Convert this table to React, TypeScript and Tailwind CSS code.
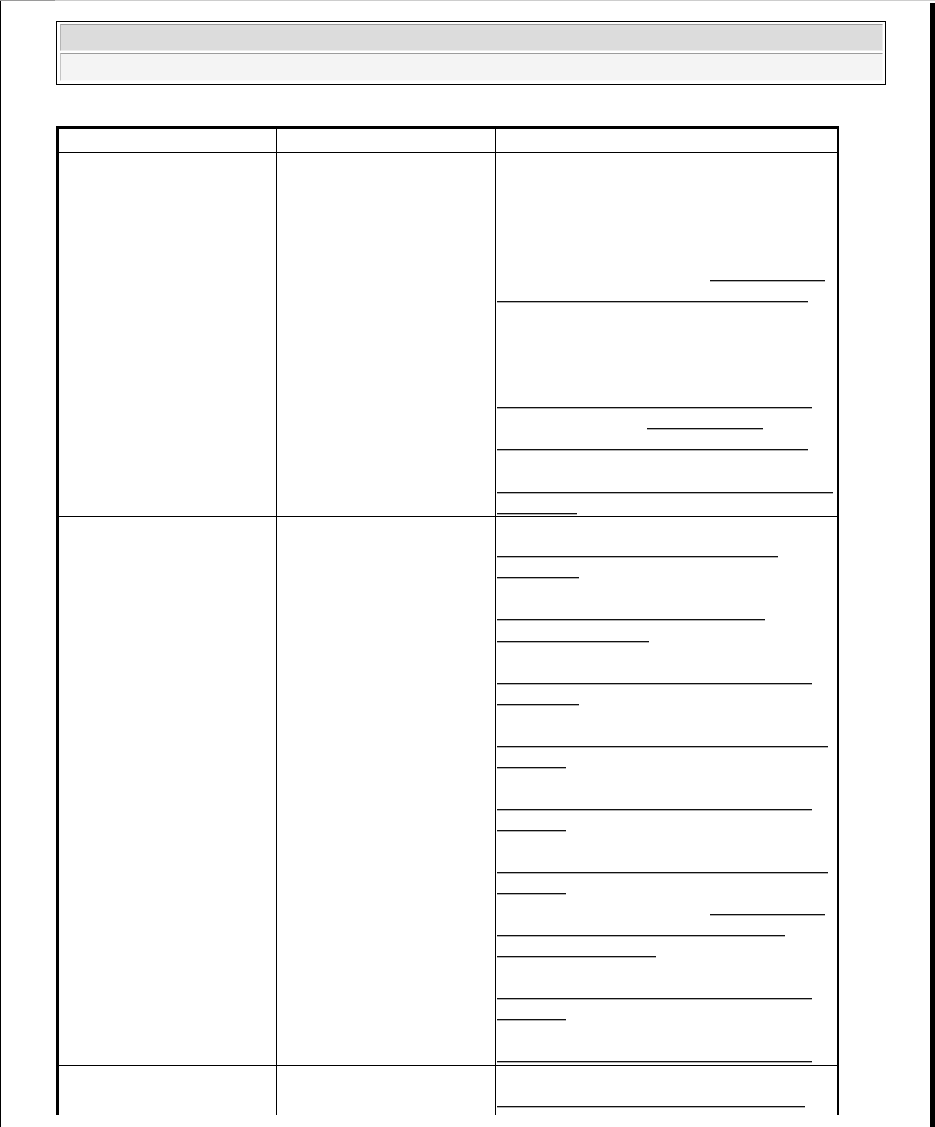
type Rule = { k: number; x: number; w: number };

// underline segments in the third column, k = text line index inside the cell
const rowOne: Rule[] = [
  { k: 5, x: 214, w: 115 },
  { k: 6, x: 1, w: 311 },
  { k: 11, x: 1, w: 315 },
  { k: 12, x: 151, w: 116 },
  { k: 13, x: 1, w: 311 },
  { k: 15, x: 1, w: 336 },
  { k: 16, x: 1, w: 80 },
];

const rowTwo: Rule[] = [
  { k: 1, x: 1, w: 281 },
  { k: 2, x: 1, w: 82 },
  { k: 4, x: 1, w: 268 },
  { k: 5, x: 1, w: 152 },
  { k: 7, x: 1, w: 315 },
  { k: 8, x: 1, w: 82 },
  { k: 10, x: 1, w: 331 },
  { k: 11, x: 1, w: 69 },
  { k: 13, x: 1, w: 315 },
  { k: 14, x: 1, w: 69 },
  { k: 16, x: 1, w: 331 },
  { k: 17, x: 1, w: 69 },
  { k: 18, x: 214, w: 115 },
  { k: 19, x: 1, w: 288 },
  { k: 20, x: 1, w: 159 },
  { k: 22, x: 1, w: 315 },
  { k: 23, x: 1, w: 69 },
  { k: 25, x: 1, w: 315 },
];

const rowThree: Rule[] = [{ k: 1, x: 1, w: 308 }];

function Lines({ rules, count, tall }: { rules: Rule[]; count: number; tall?: boolean }) {
  const lines = Array.from({ length: count }, (_, i) => rules.filter((r) => r.k === i));
  return (
    <>
      {lines.map((segs, i) => (
        <div
          key={i}
          className={`${tall ? "h-[21.18px]" : "h-[21.05px]"} shrink-0 flex pt-[18.3px]`}
        >
          {segs.map((s, j) => (
            <span
              key={j}
              className="block h-[2px] border-t border-t-[#111] border-b border-b-[#b0b0b0]"
              style={{ marginLeft: s.x, width: s.w }}
            />
          ))}
        </div>
      ))}
    </>
  );
}

function Row({
  className,
  children,
}: {
  className: string;
  children?: React.ReactNode;
}) {
  return (
    <div className={`flex ${className}`}>
      <div className="w-[218px] shrink-0 border-r border-black" />
      <div className="w-[219px] shrink-0 border-r border-black" />
      <div className="flex-1 flex flex-col overflow-hidden">{children}</div>
    </div>
  );
}

export default function App() {
  return (
    <div className="w-screen h-screen bg-white flex flex-col overflow-hidden font-['Liberation_Sans',Arial,sans-serif]">
      <div className="flex h-px shrink-0">
        <div className="w-[55px] bg-[#9a9a9a]" />
        <div className="flex-1 bg-[#cdcdcd]" />
      </div>
      <div className="flex flex-1 min-h-0">
        <div className="flex-1 min-w-0 border-l border-black">
          {/* title box */}
          <div className="ml-[55px] mt-[20px] w-[830px] h-[64px] border border-black pt-[2px] pb-[3px] pl-[3px] pr-[2px] flex flex-col gap-[2px]">
            <div className="h-[27px] bg-[#dcdcdc] border-t border-l border-t-[#9c9c9c] border-l-[#b4b4b4] border-b border-r border-b-[#ececec] border-r-[#ececec]" />
            <div className="h-[28px] bg-[#f4f4f4] border-t border-l border-t-[#9c9c9c] border-l-[#c4c4c4] border-b border-r border-b-[#fafafa] border-r-[#fafafa]" />
          </div>

          {/* main table */}
          <div className="ml-[55px] mt-[41px] w-[783px] border-t-[3px] border-l-[3px] border-r-2 border-black">
            <Row className="h-[24px] border-b border-black" />
            <Row className="h-[364px] border-b border-black">
              <div className="h-[2.9px] shrink-0" />
              <Lines rules={rowOne} count={17} tall />
            </Row>
            <Row className="h-[549px] border-b border-black">
              <Lines rules={rowTwo} count={26} />
            </Row>
            <Row className="h-[49px]">
              <div className="h-px shrink-0" />
              <Lines rules={rowThree} count={2} />
            </Row>
          </div>
        </div>
        <div className="w-[5px] shrink-0 mt-[2px] bg-black" />
      </div>
    </div>
  );
}
